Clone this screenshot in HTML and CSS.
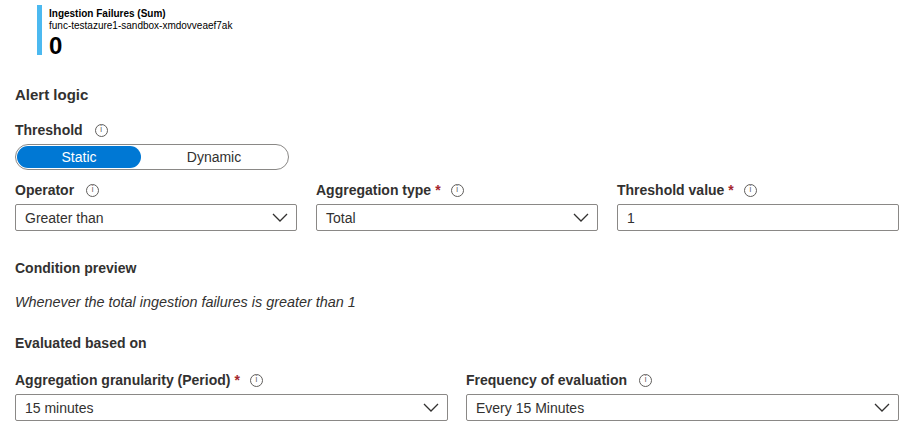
FILE: index.html
```html
<!DOCTYPE html>
<html>
<head>
<meta charset="utf-8">
<link rel="stylesheet" href="styles.css">
</head>
<body>
<div class="page">
  <div class="tile">
    <div class="tile-bar"></div>
    <div class="tile-body">
      <div class="tile-title">Ingestion Failures (Sum)</div>
      <div class="tile-sub">func-testazure1-sandbox-xmdovveaef7ak</div>
      <div class="tile-value">0</div>
    </div>
  </div>

  <div class="section-title">Alert logic</div>

  <div class="label threshold-label">Threshold <span class="info">i</span></div>
  <div class="toggle">
    <div class="toggle-opt active">Static</div>
    <div class="toggle-opt">Dynamic</div>
  </div>

  <div class="grid3">
    <div class="field">
      <div class="label">Operator <span class="info">i</span></div>
      <div class="select"><span>Greater than</span><svg class="chev" viewBox="0 0 16 9" width="16" height="9"><path d="M1 1l7 7 7-7"/></svg></div>
    </div>
    <div class="field">
      <div class="label">Aggregation type <span class="req">*</span> <span class="info">i</span></div>
      <div class="select"><span>Total</span><svg class="chev" viewBox="0 0 16 9" width="16" height="9"><path d="M1 1l7 7 7-7"/></svg></div>
    </div>
    <div class="field">
      <div class="label">Threshold value <span class="req">*</span> <span class="info">i</span></div>
      <div class="select"><span>1</span></div>
    </div>
  </div>

  <div class="label cond-title">Condition preview</div>
  <div class="cond-text">Whenever the total ingestion failures is greater than 1</div>

  <div class="label eval-title">Evaluated based on</div>

  <div class="grid2">
    <div class="field">
      <div class="label">Aggregation granularity (Period) <span class="req">*</span> <span class="info">i</span></div>
      <div class="select"><span>15 minutes</span><svg class="chev" viewBox="0 0 16 9" width="16" height="9"><path d="M1 1l7 7 7-7"/></svg></div>
    </div>
    <div class="field">
      <div class="label">Frequency of evaluation <span class="info">i</span></div>
      <div class="select"><span>Every 15 Minutes</span><svg class="chev" viewBox="0 0 16 9" width="16" height="9"><path d="M1 1l7 7 7-7"/></svg></div>
    </div>
  </div>
</div>
</body>
</html>
```
FILE: styles.css
```css
html, body {
  margin: 0;
  padding: 0;
  background: #ffffff;
}
body {
  font-family: "Liberation Sans", Arial, sans-serif;
  color: #323130;
  font-size: 14px;
}
.page {
  padding: 5px 19px 0 15px;
}
.tile {
  display: flex;
  margin-left: 22px;
  height: 50px;
}
.tile-bar {
  width: 5px;
  background: #4cb9f0;
  flex: none;
}
.tile-body {
  padding-left: 7px;
  padding-top: 3px;
  color: #000;
}
.tile-title {
  font-size: 10px;
  font-weight: 700;
  line-height: 12px;
}
.tile-sub {
  font-size: 10px;
  line-height: 12px;
}
.tile-value {
  font-size: 24px;
  font-weight: 700;
  line-height: 24px;
  margin-top: 2px;
}
.section-title {
  margin-top: 30px;
  font-size: 15px;
  font-weight: 700;
  line-height: 20px;
}
.label {
  font-size: 14px;
  font-weight: 700;
  line-height: 20px;
  display: flex;
  align-items: center;
  white-space: nowrap;
}
.threshold-label {
  margin-top: 15px;
}
.req {
  color: #a4262c;
  margin-left: 4px;
}
.info {
  display: inline-flex;
  align-items: center;
  justify-content: center;
  width: 11px;
  height: 11px;
  border: 1px solid #605e5c;
  border-radius: 50%;
  font-size: 8px;
  font-weight: 400;
  color: #605e5c;
  margin-left: 12px;
  line-height: 1;
  font-family: "DejaVu Sans", sans-serif;
}
.req + .info {
  margin-left: 10px;
}
.toggle {
  box-sizing: border-box;
  margin-top: 4px;
  width: 274px;
  height: 26px;
  border: 1px solid #8a8886;
  border-radius: 13px;
  padding: 1px;
  display: flex;
}
.toggle-opt {
  width: 124px;
  height: 22px;
  border-radius: 11px;
  display: flex;
  align-items: center;
  justify-content: center;
  font-size: 14px;
  color: #323130;
  flex: none;
}
.toggle-opt + .toggle-opt {
  flex: 1;
}
.toggle-opt.active {
  background: #0078d4;
  color: #ffffff;
}
.grid3 {
  margin-top: 10px;
  display: grid;
  grid-template-columns: repeat(3, 1fr);
  column-gap: 19px;
}
.grid2 {
  margin-top: 17px;
  display: grid;
  grid-template-columns: 1fr 1fr;
  column-gap: 18px;
}
.field .label {
  margin-bottom: 4px;
}
.select {
  height: 25px;
  border: 1px solid #8a8886;
  border-radius: 2px;
  display: flex;
  align-items: center;
  justify-content: space-between;
  padding: 0 8px 0 9px;
  font-size: 14px;
  color: #323130;
}
.chev {
  fill: none;
  stroke: #323130;
  stroke-width: 1.3;
}
.cond-title {
  margin-top: 27px;
}
.cond-text {
  margin-top: 14px;
  font-style: italic;
  line-height: 20px;
  font-size: 14.4px;
}
.eval-title {
  margin-top: 21px;
}
```
